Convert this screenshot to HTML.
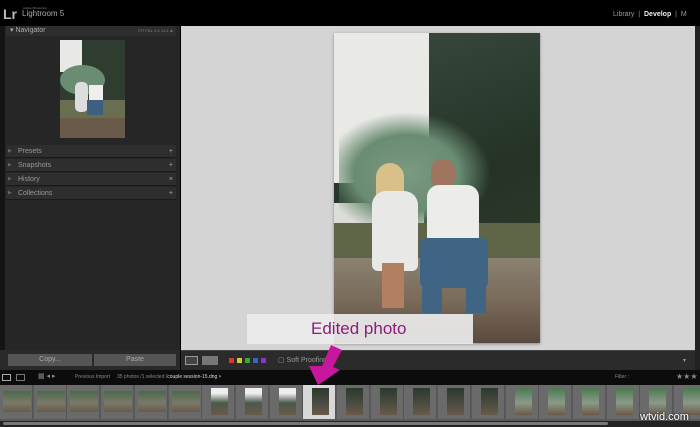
<!DOCTYPE html>
<html><head><meta charset="utf-8"><style>
*{margin:0;padding:0;box-sizing:border-box}
body{width:700px;height:427px;overflow:hidden;background:#000;font-family:"Liberation Sans",sans-serif;position:relative}
.a{position:absolute}
.row{position:absolute;left:6px;width:170px;height:13px;background:#2e2e2e;color:#9a9a9a;font-size:7px;line-height:13px;padding-left:12px;border-bottom:1px solid #1a1a1a}
.row:before{content:"▶";position:absolute;left:2px;font-size:5px;color:#666}
.row b{position:absolute;right:3px;font-weight:normal;color:#aaa}
.th{position:absolute;top:385px;height:34px;width:33px;background:#6a6a6a;border-right:1px solid #555}
</style></head><body>
<div class="a" style="left:3px;top:6px;color:#bbb;font-size:14px;font-weight:bold">Lr</div>
<div class="a" style="left:23px;top:6px;color:#888;font-size:3px">Adobe Photoshop</div>
<div class="a" style="left:22px;top:9px;color:#aaa;font-size:8px">Lightroom 5</div>
<div class="a" style="left:613px;top:11px;color:#999;font-size:7px">Library &nbsp;|&nbsp; <span style="color:#eee;font-weight:bold">Develop</span> &nbsp;| &nbsp;M</div>
<div class="a" style="left:0;top:26px;width:180px;height:324px;background:#262626"></div>
<div class="a" style="left:0;top:26px;width:5px;height:324px;background:#141414"></div>
<div class="a" style="left:6px;top:26px;width:170px;height:10px;background:#2e2e2e;color:#aaa;font-size:7px;line-height:10px;padding-left:4px">▾ Navigator<span style="position:absolute;right:3px;font-size:4px;color:#888">FIT FILL 1:1 11:1 ≑</span></div>
<div class="a" style="left:60px;top:40px;width:65px;height:98px;overflow:hidden;background:#5b4a3f">
<div class="a" style="left:0;top:0;width:65px;height:70px;background:#2e3d30"></div>
<div class="a" style="left:0;top:0;width:22px;height:32px;background:#e8e8e6"></div>
<div class="a" style="left:0;top:25px;width:45px;height:30px;background:#6a8c72;border-radius:50%"></div>
<div class="a" style="left:0;top:60px;width:65px;height:20px;background:#6a6e50"></div>
<div class="a" style="left:0;top:78px;width:65px;height:20px;background:#6a5a4a"></div>
<div class="a" style="left:15px;top:42px;width:13px;height:30px;background:#ddd;border-radius:5px"></div>
<div class="a" style="left:29px;top:45px;width:14px;height:15px;background:#eee"></div>
<div class="a" style="left:27px;top:60px;width:16px;height:15px;background:#3f5f80"></div>
</div>
<div class="row" style="top:145px">Presets<b>+</b></div>
<div class="row" style="top:159px">Snapshots<b>+</b></div>
<div class="row" style="top:173px">History<b>×</b></div>
<div class="row" style="top:187px">Collections<b>+</b></div>
<div class="a" style="left:0;top:350px;width:180px;height:20px;background:#2a2a2a"></div>
<div class="a" style="left:8px;top:354px;width:84px;height:12px;background:#555;color:#aaa;font-size:7px;text-align:center;line-height:12px">Copy...</div>
<div class="a" style="left:94px;top:354px;width:82px;height:12px;background:#555;color:#aaa;font-size:7px;text-align:center;line-height:12px">Paste</div>
<div class="a" style="left:181px;top:26px;width:514px;height:324px;background:#d4d4d4"></div>
<div class="a" style="left:695px;top:26px;width:5px;height:344px;background:#222"></div>
<div class="a" style="left:334px;top:33px;width:206px;height:310px;overflow:hidden;background:#6a5d4f;box-shadow:0 1px 3px #888">
 <div class="a" style="left:0;top:0;width:206px;height:250px;background:linear-gradient(160deg,#3a4a3e,#253327 60%,#2e3a2a)"></div>
 <div class="a" style="left:0;top:0;width:95px;height:150px;background:#e9e9e6;border-radius:0 0 40px 0"></div>
 <div class="a" style="left:0;top:170px;width:90px;height:30px;background:#dcdcd8"></div>
 <div class="a" style="left:5px;top:80px;width:150px;height:110px;background:radial-gradient(ellipse at 45% 55%,#7a9a82 0,#6a8c72 45%,transparent 72%)"></div>
 <div class="a" style="left:0;top:190px;width:206px;height:50px;background:#5f6648"></div>
 <div class="a" style="left:0;top:225px;width:206px;height:85px;background:linear-gradient(180deg,#8a8272,#7a6a5a 50%,#5a4a3e)"></div>
 <div class="a" style="left:42px;top:130px;width:28px;height:45px;background:#d8c08a;border-radius:14px 14px 4px 4px"></div>
 <div class="a" style="left:38px;top:158px;width:46px;height:80px;background:#e8e8e6;border-radius:14px 14px 6px 6px"></div>
 <div class="a" style="left:48px;top:230px;width:22px;height:45px;background:#b08060"></div>
 <div class="a" style="left:97px;top:126px;width:24px;height:30px;background:#a07560;border-radius:11px"></div>
 <div class="a" style="left:93px;top:152px;width:52px;height:58px;background:#ececea;border-radius:12px 12px 4px 4px"></div>
 <div class="a" style="left:86px;top:205px;width:68px;height:50px;background:#3f6484;border-radius:6px"></div>
 <div class="a" style="left:88px;top:250px;width:20px;height:30px;background:#3f6484"></div>
 <div class="a" style="left:132px;top:250px;width:20px;height:30px;background:#3f6484"></div>
</div>
<div class="a" style="left:247px;top:314px;width:226px;height:30px;background:rgba(235,235,235,.92);color:#8c1d7c;font-size:17px;line-height:30px;padding-left:64px">Edited photo</div>
<div class="a" style="left:181px;top:350px;width:514px;height:20px;background:#2b2b2b;border-top:1px solid #444"></div>
<div class="a" style="left:185px;top:356px;width:13px;height:9px;border:1px solid #999;background:#444"></div>
<div class="a" style="left:202px;top:356px;width:16px;height:9px;background:#777"></div>
<div class="a" style="left:229px;top:358px;width:5px;height:5px;background:#d33"></div>
<div class="a" style="left:237px;top:358px;width:5px;height:5px;background:#cc3"></div>
<div class="a" style="left:245px;top:358px;width:5px;height:5px;background:#3a3"></div>
<div class="a" style="left:253px;top:358px;width:5px;height:5px;background:#36c"></div>
<div class="a" style="left:261px;top:358px;width:5px;height:5px;background:#83c"></div>
<div class="a" style="left:278px;top:356px;color:#999;font-size:7px">▢ Soft Proofing</div>
<div class="a" style="left:683px;top:357px;color:#999;font-size:6px">▾</div>
<div class="a" style="left:0;top:370px;width:700px;height:15px;background:#0c0c0c"></div>
<div class="a" style="left:2px;top:374px;width:9px;height:7px;border:1px solid #aaa"></div>
<div class="a" style="left:16px;top:374px;width:9px;height:7px;border:1px solid #777"></div>
<div class="a" style="left:38px;top:372px;color:#888;font-size:7px">▦ ◂ ▸</div>
<div class="a" style="left:75px;top:374px;color:#888;font-size:5px;white-space:nowrap">Previous Import &nbsp;&nbsp;&nbsp; 35 photos /1 selected /<span style="color:#ddd">couple session-15.dng</span> ▾</div>
<div class="a" style="left:615px;top:374px;color:#888;font-size:5px">Filter :</div>
<div class="a" style="left:676px;top:372px;color:#888;font-size:8px">★★★</div>
<div class="a" style="left:0;top:385px;width:700px;height:42px;background:#5a5a5a"></div>
<div id="fs"></div>
<div class="a" style="left:0;top:421px;width:700px;height:6px;background:#222"></div>
<div class="a" style="left:3px;top:422px;width:605px;height:3px;background:#777;border-radius:2px"></div>
<div class="a" style="left:640px;top:411px;color:#fff;font-size:11px;text-shadow:0 0 2px #000">wtvid.com</div>
<svg class="a" style="left:0;top:0" width="700" height="427"><polygon points="331,345 342,350 333,367 340,370 318,385 309,366 322,366" fill="#c8169f"/></svg>
<script>
var fs=document.getElementById('fs'),h='';
for(var i=0;i<21;i++){var x=i*33.7;var sel=i==9;
h+='<div class="th" style="left:'+x+'px;'+(sel?'background:#d8d8d8;':'')+'"></div>';
if(i<6)h+='<div class="a" style="left:'+(x+3)+'px;top:391px;width:28px;height:21px;background:linear-gradient(180deg,#4a6a4a,#7a7a6a 55%,#6a5a4a)"></div>';
else{var c=i>=15?'#4a7a50,#8a9a88':(i<9?'#eee 20%,#4a5a4a':'#2a3a2c,#4a4a40');
h+='<div class="a" style="left:'+(x+9)+'px;top:388px;width:17px;height:27px;background:linear-gradient(180deg,'+c+' 55%,#6a5a4a)"></div>';}}
fs.innerHTML=h;
</script>
</body></html>
